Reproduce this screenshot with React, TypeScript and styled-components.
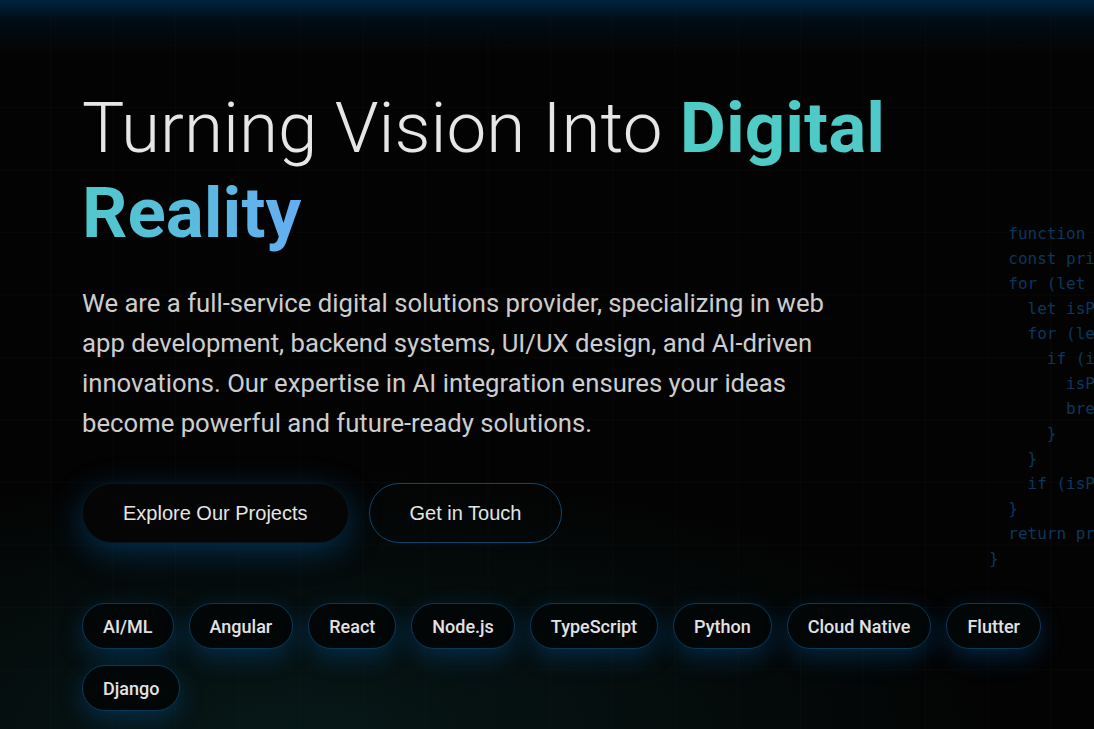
import styled, { createGlobalStyle } from "styled-components";

const GlobalStyle = createGlobalStyle`
  html, body {
    margin: 0;
    padding: 0;
    background: #030303;
  }

  body {
    font-family: "Roboto", "Liberation Sans", sans-serif;
    overflow: hidden;
  }
`;

const CODE_LINES = [
  "  function findPrimes(n) {",
  "  const primes = [];",
  "  for (let i = 2; i <= n; i++) {",
  "    let isPrime = true;",
  "    for (let j = 2; j < i; j++) {",
  "      if (i % j === 0) {",
  "        isPrime = false;",
  "        break;",
  "      }",
  "    }",
  "    if (isPrime) primes.push(i);",
  "  }",
  "  return primes;",
  "}",
];

const TECH = [
  "AI/ML",
  "Angular",
  "React",
  "Node.js",
  "TypeScript",
  "Python",
  "Cloud Native",
  "Flutter",
  "Django",
];

export default function App() {
  return (
    <>
      <GlobalStyle />
      <Hero>
        <CodeBackdrop aria-hidden>{CODE_LINES.join("\n")}</CodeBackdrop>
        <Content>
          <Title>
            Turning Vision Into <Highlight>Digital Reality</Highlight>
          </Title>
          <Lead>
            We are a full-service digital solutions provider, specializing in
            web app development, backend systems, UI/UX design, and AI-driven
            innovations. Our expertise in AI integration ensures your ideas
            become powerful and future-ready solutions.
          </Lead>
          <Actions>
            <Button $primary>Explore Our Projects</Button>
            <Button>Get in Touch</Button>
          </Actions>
          <TagList>
            {TECH.map((t) => (
              <Tag key={t}>{t}</Tag>
            ))}
          </TagList>
        </Content>
      </Hero>
    </>
  );
}

const Hero = styled.section`
  position: relative;
  width: 100vw;
  height: 100vh;
  overflow: hidden;

  background-color: #030303;
  background-image: linear-gradient(
      180deg,
      rgba(0, 42, 74, 0.85) 0px,
      rgba(0, 24, 44, 0.45) 20px,
      rgba(3, 3, 3, 0) 55px
    ),
    radial-gradient(
      ellipse 700px 260px at 300px 729px,
      rgba(10, 40, 40, 0.55),
      rgba(3, 3, 3, 0)
    ),
    linear-gradient(rgba(255, 255, 255, 0.014) 1px, transparent 1px),
    linear-gradient(90deg, rgba(255, 255, 255, 0.014) 1px, transparent 1px);
  background-size: 100% 100%, 100% 100%, 62.5px 62.5px, 62.5px 62.5px;
  background-position: 0 0, 0 0, 50px -18px, 50px -18px;
`;

const CodeBackdrop = styled.pre`
  position: absolute;
  top: 221px;
  left: 989px;
  margin: 0;

  font-family: "DejaVu Sans Mono", "Liberation Mono", monospace;
  font-size: 16px;
  line-height: 25px;
  color: #0b375c;
  white-space: pre;
  pointer-events: none;
`;

const Content = styled.div`
  position: relative;
  display: flex;
  flex-direction: column;
  align-items: flex-start;

  padding: 85px 30px 0 82px;
`;

const Title = styled.h1`
  margin: 0;
  max-width: 880px;

  font-family: "Roboto", sans-serif;
  font-weight: 300;
  font-size: 71px;
  line-height: 85px;
  color: #e6e6e6;
`;

const Highlight = styled.span`
  font-weight: 700;
  background: linear-gradient(90deg, #4ecdc4 0%, #4fcac8 45%, #64aef2 100%);
  -webkit-background-clip: text;
  background-clip: text;
  color: transparent;
`;

const Lead = styled.p`
  margin: 28px 0 0;
  max-width: 770px;

  font-family: "Roboto", sans-serif;
  font-weight: 400;
  font-size: 25.7px;
  line-height: 40px;
  color: #cdcdcd;
`;

const Actions = styled.div`
  display: flex;
  gap: 20px;
  margin-top: 40px;
`;

const Button = styled.button<{ $primary?: boolean }>`
  height: 60px;
  padding: 0 40px;
  border-radius: 30px;

  font-family: "Liberation Sans", Arial, sans-serif;
  font-size: 20px;
  color: #e4e4e4;
  cursor: pointer;

  background: ${({ $primary }) => ($primary ? "#050505" : "transparent")};
  border: 1px solid
    ${({ $primary }) => ($primary ? "rgba(20, 40, 60, 0.4)" : "#10456e")};
  box-shadow: ${({ $primary }) =>
    $primary ? "0 8px 32px rgba(0, 120, 210, 0.36)" : "none"};
`;

const TagList = styled.div`
  display: flex;
  flex-wrap: wrap;
  gap: 16px 15px;
  margin-top: 60px;
  max-width: 980px;
`;

const Tag = styled.span`
  display: flex;
  align-items: center;
  height: 46px;
  box-sizing: border-box;
  padding: 0 20px;
  border-radius: 23px;

  font-family: "Roboto", sans-serif;
  font-weight: 500;
  font-size: 18px;
  color: #e2e2e2;

  background: #030607;
  border: 1px solid #0c3858;
  box-shadow: 0 8px 24px rgba(0, 110, 200, 0.3);
`;
